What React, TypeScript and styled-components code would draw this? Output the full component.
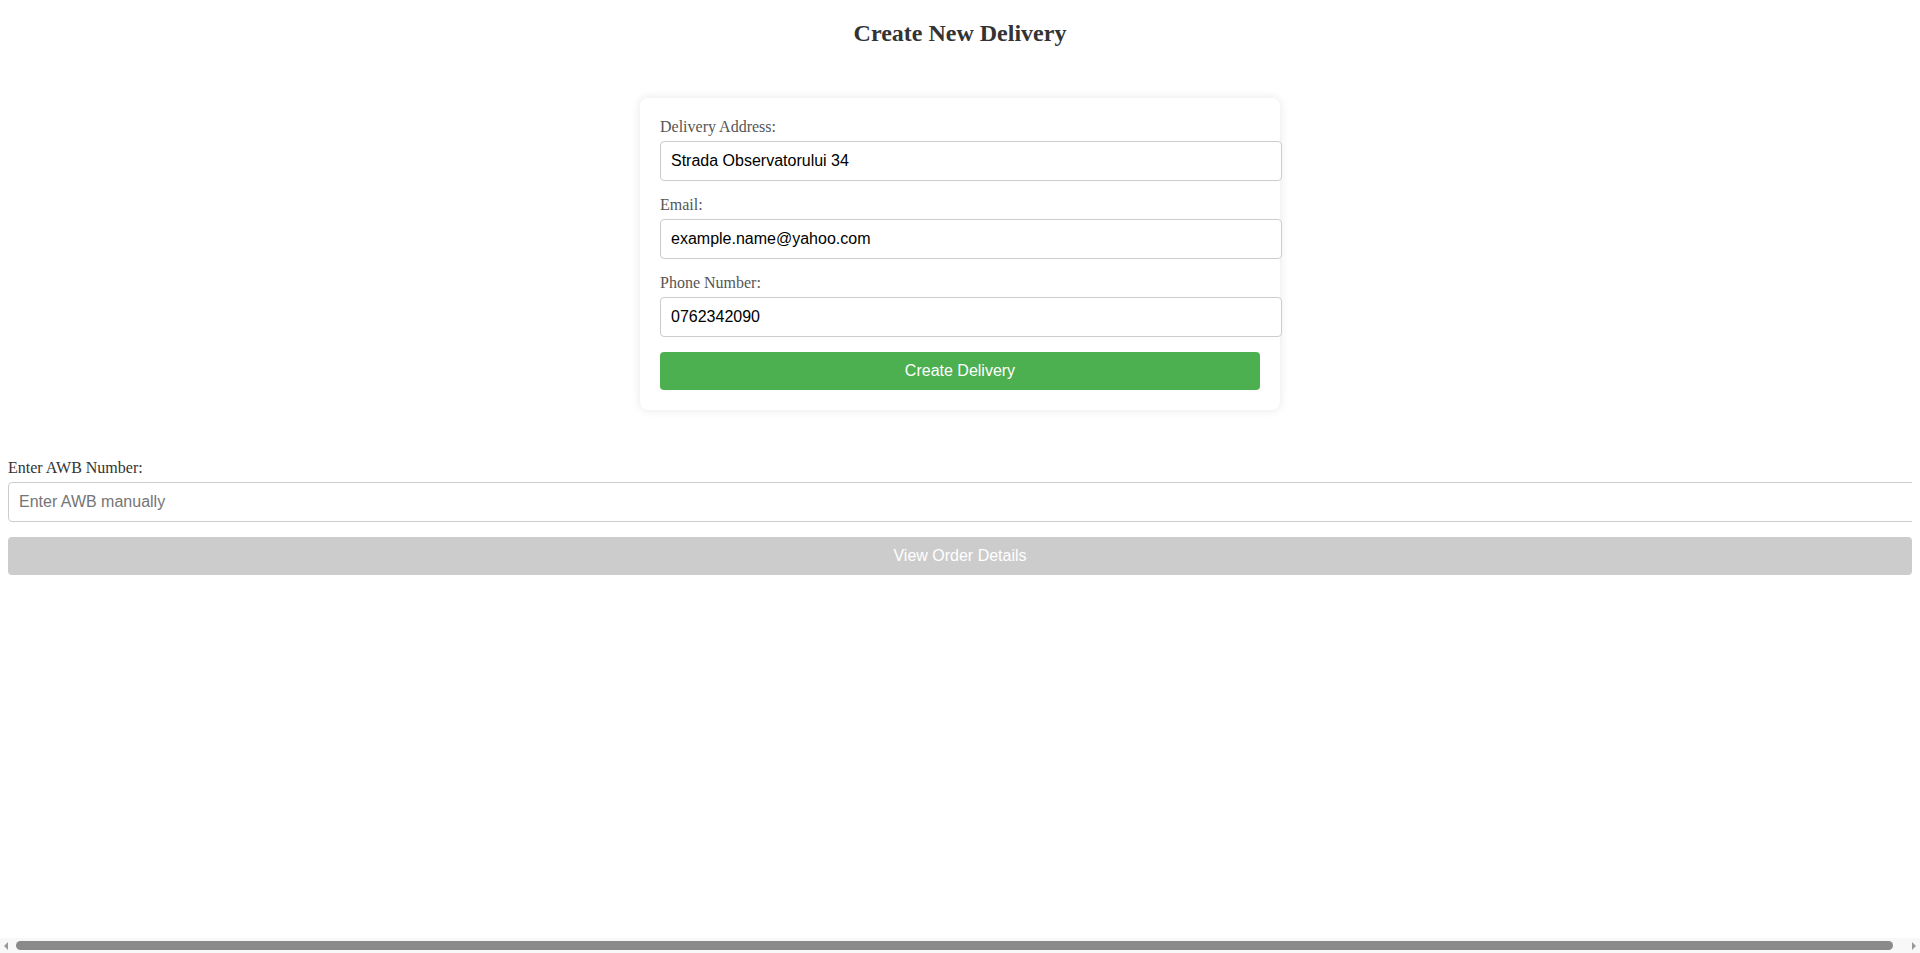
import React, { useState } from 'react';
import styled, { createGlobalStyle } from 'styled-components';

const GlobalStyle = createGlobalStyle`
    body {
        margin: 8px;
        background: #fff;
        font-family: "Liberation Serif", "Times New Roman", serif;
    }
`;

const Title = styled.h2`
    text-align: center;
    font-size: 24px;
    font-weight: bold;
    color: #333;
    margin: 12px 0 19.92px;
`;

const FormCard = styled.form`
    width: 600px;
    margin: 51px auto 49px;
    padding: 20px;
    background: #fff;
    border-radius: 8px;
    box-shadow: 0 0 10px rgba(0, 0, 0, 0.1);
`;

const Label = styled.label<{ $dark?: boolean }>`
    display: block;
    margin-bottom: 5px;
    font-size: 16px;
    color: ${p => (p.$dark ? '#333' : '#555')};
`;

const TextInput = styled.input`
    display: block;
    box-sizing: content-box;
    width: 100%;
    padding: 10px;
    margin: 0 0 15px;
    font-family: "Liberation Sans", Arial, sans-serif;
    font-size: 16px;
    color: #000;
    border: 1px solid #ccc;
    border-radius: 4px;
    background: #fff;
    outline: none;

    &::placeholder {
        color: #757575;
    }
`;

const ActionButton = styled.button<{ $disabled?: boolean }>`
    display: block;
    width: 100%;
    box-sizing: border-box;
    padding: 10px;
    font-family: "Liberation Sans", Arial, sans-serif;
    font-size: 16px;
    color: #fff;
    border: none;
    border-radius: 4px;
    background: ${p => (p.$disabled ? '#ccc' : '#4CAF50')};
    cursor: ${p => (p.$disabled ? 'not-allowed' : 'pointer')};
`;

const AwbSection = styled.div``;

// the browser's horizontal scrollbar, which the headless shot leaves out
const ScrollTrack = styled.div`
    position: fixed;
    left: 0;
    right: 0;
    bottom: 0;
    height: 15px;
    background: #f8f8f8;
    display: flex;
    align-items: center;
    gap: 5px;
    padding: 0 4px;
`;

const ScrollArrow = styled.span<{ $right?: boolean }>`
    width: 0;
    height: 0;
    border-top: 4px solid transparent;
    border-bottom: 4px solid transparent;
    ${p => (p.$right ? 'border-left: 4px solid #999;' : 'border-right: 4px solid #999;')}
`;

const ScrollThumb = styled.div`
    flex: 1;
    height: 9px;
    margin: 0 14px 0 3px;
    border-radius: 5px;
    background: #8a8a8a;
`;

const App = () => {
    const [address, setAddress] = useState('Strada Observatorului 34');
    const [email, setEmail] = useState('example.name@yahoo.com');
    const [phone, setPhone] = useState('0762342090');
    const [awb, setAwb] = useState('');

    return (
        <>
            <GlobalStyle />
            <Title>Create New Delivery</Title>
            <FormCard onSubmit={e => e.preventDefault()}>
                <Label>Delivery Address:</Label>
                <TextInput value={address} onChange={e => setAddress(e.target.value)} />
                <Label>Email:</Label>
                <TextInput value={email} onChange={e => setEmail(e.target.value)} />
                <Label>Phone Number:</Label>
                <TextInput value={phone} onChange={e => setPhone(e.target.value)} />
                <ActionButton type="submit">Create Delivery</ActionButton>
            </FormCard>
            <AwbSection>
                <Label $dark>Enter AWB Number:</Label>
                <TextInput
                    placeholder="Enter AWB manually"
                    value={awb}
                    onChange={e => setAwb(e.target.value)}
                />
                <ActionButton $disabled={!awb} disabled={!awb}>View Order Details</ActionButton>
            </AwbSection>
            <ScrollTrack>
                <ScrollArrow />
                <ScrollThumb />
                <ScrollArrow $right />
            </ScrollTrack>
        </>
    );
};

export default App;
